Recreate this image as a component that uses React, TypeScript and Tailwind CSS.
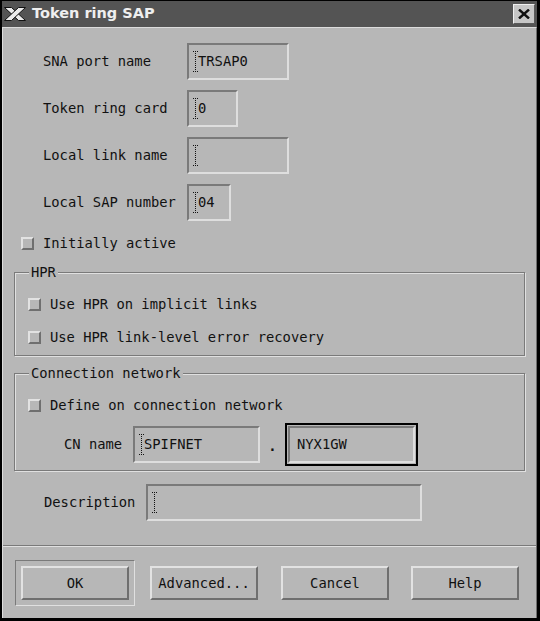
const sunken = "border-2 border-t-[#7a7a7a] border-l-[#7a7a7a] border-b-[#dedede] border-r-[#dedede]";
const raised = "border-2 border-t-[#e2e2e2] border-l-[#e2e2e2] border-b-[#6f6f6f] border-r-[#6f6f6f]";

const XLogo = () => (
  <svg width="22" height="14" viewBox="0 0 22 14">
    <polygon points="0.5,0.5 7.5,0.5 21.5,13.5 14.5,13.5" fill="#ececec" stroke="#111" strokeWidth="1" />
    <polygon points="14.5,0.5 21.5,0.5 7.5,13.5 0.5,13.5" fill="#ececec" stroke="#111" strokeWidth="1" />
    <polygon points="5.2,2 16.8,12 " fill="none" />
  </svg>
);

const Cursor = () => (
  <svg width="5" height="21" viewBox="0 0 5 21" className="shrink-0">
    <line x1="2.5" y1="2" x2="2.5" y2="19" stroke="#111" strokeWidth="1" strokeDasharray="1 1" />
    <line x1="0" y1="0.5" x2="5" y2="0.5" stroke="#111" strokeWidth="1" strokeDasharray="1 1" />
    <line x1="0" y1="20.5" x2="5" y2="20.5" stroke="#111" strokeWidth="1" strokeDasharray="1 1" />
  </svg>
);

const Field = ({ w, value, cursor = true }: { w: string; value?: string; cursor?: boolean }) => (
  <div className={`${w} h-[37px] shrink-0 ${sunken} flex items-center ${cursor ? "pl-[4px]" : "pl-[7px]"}`}>
    {cursor && <Cursor />}
    {value && <span className="leading-none">{value}</span>}
  </div>
);

const Check = ({ label, className }: { label: string; className: string }) => (
  <div className={`h-[20px] flex items-center gap-[9px] ${className}`}>
    <div className={`w-[13px] h-[13px] ${raised}`} />
    <span>{label}</span>
  </div>
);

const Group = ({ title, className, children }: { title: string; className: string; children: React.ReactNode }) => (
  <div
    className={`ml-[11px] w-[511px] border border-[#7a7a7a] shadow-[inset_1px_1px_0_#e0e0e0,1px_1px_0_#e0e0e0] flex flex-col ${className}`}
  >
    <span className="-mt-[9px] ml-[14px] w-fit h-[16px] leading-[16px] px-[2px] bg-[#b7b7b7]">{title}</span>
    {children}
  </div>
);

const Btn = ({ label, className = "" }: { label: string; className?: string }) => (
  <button className={`w-[108px] h-[34px] ${raised} bg-[#b7b7b7] flex items-center justify-center ${className}`}>
    {label}
  </button>
);

const rows = [
  { label: "SNA port name", w: "w-[102px]", value: "TRSAP0" },
  { label: "Token ring card", w: "w-[51px]", value: "0" },
  { label: "Local link name", w: "w-[102px]", value: "" },
  { label: "Local SAP number", w: "w-[44px]", value: "04" },
];

export default function App() {
  return (
    <div className="w-[540px] h-[621px] bg-black pl-[2px] pt-[1px] pr-[3px] pb-[3px] flex flex-col font-['DejaVu_Sans_Mono',monospace] text-[13.8px] text-[#111]">
      {/* Title bar */}
      <div className="h-[26px] shrink-0 bg-[#545454] flex items-center pl-[2px] pr-[2px]">
        <XLogo />
        <span className="ml-[6px] font-['DejaVu_Sans',sans-serif] font-bold text-[14.5px] text-[#efefef]">
          Token ring SAP
        </span>
        <div className="ml-auto w-[22px] h-[20px] bg-[#c6c6c6] border border-t-[#f0f0f0] border-l-[#f0f0f0] border-b-[#5a5a5a] border-r-[#5a5a5a] flex items-center justify-center">
          <svg width="12" height="10" viewBox="0 0 12 10">
            <path d="M1 0.5 L11 9.5 M11 0.5 L1 9.5" stroke="#111" strokeWidth="2.4" />
          </svg>
        </div>
      </div>

      {/* Body */}
      <div className="flex-1 bg-[#b7b7b7] border-t border-l border-t-[#dcdcdc] border-l-[#dcdcdc] border-r border-r-[#6e6e6e] flex flex-col">
        <div className="mt-[15px] pl-[40px] flex flex-col gap-[10px]">
          {rows.map((r) => (
            <div key={r.label} className="h-[37px] flex items-center">
              <span className="w-[144px]">{r.label}</span>
              <Field w={r.w} value={r.value} />
            </div>
          ))}
        </div>

        <Check label="Initially active" className="mt-[12px] ml-[18px]" />

        <Group title="HPR" className="mt-[19px] pb-[8px]">
          <Check label="Use HPR on implicit links" className="mt-[14px] ml-[13px]" />
          <Check label="Use HPR link-level error recovery" className="mt-[13px] ml-[13px]" />
        </Group>

        <Group title="Connection network" className="mt-[17px] pb-[4px]">
          <Check label="Define on connection network" className="mt-[14px] ml-[13px]" />
          <div className="mt-[8px] h-[43px] pl-[49px] flex items-center">
            <span className="w-[69px]">CN name</span>
            <Field w="w-[127px]" value="SPIFNET" />
            <span className="w-[25px] text-center font-bold pt-[4px]">.</span>
            <div className="w-[133px] h-[43px] border-2 border-black p-[1px]">
              <Field w="w-full" value="NYX1GW" cursor={false} />
            </div>
          </div>
        </Group>

        <div className="mt-[13px] h-[37px] pl-[41px] flex items-center">
          <span className="w-[102px]">Description</span>
          <Field w="w-[276px]" value="" />
        </div>

        <div className="mt-[24px] h-[2px] border-t border-t-[#7a7a7a] border-b border-b-[#e0e0e0]" />

        <div className="mt-[13px] pl-[12px] flex items-center">
          <div className="p-[5px] border border-t-[#7a7a7a] border-l-[#7a7a7a] border-b-[#e0e0e0] border-r-[#e0e0e0]">
            <Btn label="OK" />
          </div>
          <Btn label="Advanced..." className="ml-[15px]" />
          <Btn label="Cancel" className="ml-[23px]" />
          <Btn label="Help" className="ml-[22px]" />
        </div>
      </div>
    </div>
  );
}
